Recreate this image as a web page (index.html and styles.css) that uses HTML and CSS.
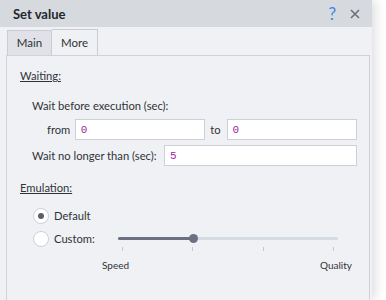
FILE: index.html
```html
<!DOCTYPE html>
<html lang="en">
<head>
    <meta charset="UTF-8">
    <title>Set value</title>
    <link rel="stylesheet" href="styles.css">
</head>
<body>
    <div class="window">
        <header class="titlebar">
            <span class="title">Set value</span>
            <span class="help">?</span>
            <svg class="close" width="10" height="10" viewBox="0 0 10 10">
                <path d="M1 1 L9 9 M9 1 L1 9" stroke="#6b6f78" stroke-width="1.6"/>
            </svg>
        </header>
        <nav class="tabs">
            <div class="tab">Main</div>
            <div class="tab active">More</div>
        </nav>
        <section class="panel">
            <h3 class="group">Waiting:</h3>
            <div class="row label-row">Wait before execution (sec):</div>
            <div class="row range-row">
                <span class="from">from</span>
                <div class="input">0</div>
                <span class="to">to</span>
                <div class="input">0</div>
            </div>
            <div class="row limit-row">
                <span class="limit-label">Wait no longer than (sec):</span>
                <div class="input">5</div>
            </div>

            <h3 class="group emu">Emulation:</h3>
            <div class="row radio-row">
                <span class="radio checked"></span>
                <span>Default</span>
            </div>
            <div class="row radio-row custom">
                <span class="radio"></span>
                <span class="custom-label">Custom:</span>
                <div class="slider">
                    <div class="track"><div class="fill" style="width: 34%"></div></div>
                    <span class="thumb" style="left: 34%"></span>
                    <div class="ticks"><i></i><i></i><i></i><i></i></div>
                </div>
            </div>
            <div class="scale">
                <span>Speed</span>
                <span>Quality</span>
            </div>
        </section>
    </div>
</body>
</html>
```

FILE: styles.css
```css
body {
    margin: 0;
    background-color: #ffffff;
    font-family: Lato, "Noto Sans", sans-serif;
    font-size: 11.2px;
    color: #2f3338;
}

.window {
    width: 372px;
    height: 300px;
    overflow: hidden;
    background-color: #f0f1f5;
    box-shadow: 4px 0 10px rgba(0, 0, 0, 0.12);
}

.titlebar {
    height: 27px;
    background-color: #d6d9de;
    display: flex;
    align-items: center;
    padding: 0 12px 0 13px;
}

.title {
    flex: 1;
    font-weight: bold;
    font-size: 13px;
    color: #23272c;
}

.help {
    color: #3d86e6;
    font-size: 17px;
    margin-right: 14px;
}

.tabs {
    display: flex;
    align-items: flex-end;
    height: 28px;
    padding-left: 7px;
}

.tab {
    width: 43px;
    height: 24px;
    line-height: 24px;
    text-align: center;
    background-color: #e0e2e7;
    border: 1px solid #c9ccd3;
    border-bottom: none;
    font-size: 11.5px;
}

.tab.active {
    width: 45px;
    height: 25px;
    line-height: 26px;
    background-color: #f0f1f5;
    border-left: none;
}

.panel {
    margin: 0 2px 0 6px;
    height: 260px;
    border: 1px solid #cfd2d8;
    padding: 13px 12px 0 13px;
}

.group {
    margin: 0;
    font-size: 11.2px;
    font-weight: normal;
    text-decoration: underline;
}

.row {
    display: flex;
    align-items: center;
}

.label-row {
    margin: 17px 0 0 12px;
}

.range-row {
    margin: 7px 0 0 27px;
}

.from {
    width: 28px;
}

.to {
    margin: 0 6px 0 5px;
}

.input {
    width: 124px;
    height: 19px;
    line-height: 20px;
    background-color: #ffffff;
    border: 1px solid #cdd0d7;
    padding-left: 5px;
    font-family: "Liberation Mono", monospace;
    font-size: 11px;
    color: #9c1e9e;
}

.limit-row {
    margin: 5px 0 0 12px;
}

.limit-label {
    flex-shrink: 0;
    width: 132px;
    white-space: nowrap;
}

.limit-row .input {
    width: 187px;
}

.emu {
    margin-top: 15px;
}

.radio-row {
    margin: 13px 0 0 13px;
    height: 17px;
}

.radio-row.custom {
    margin-top: 6px;
}

.radio {
    width: 14px;
    height: 14px;
    border: 1px solid #cdd0d7;
    border-radius: 50%;
    background-color: #ffffff;
    margin-right: 5px;
    position: relative;
}

.radio.checked::after {
    content: "";
    position: absolute;
    left: 4px;
    top: 4px;
    width: 6px;
    height: 6px;
    border-radius: 50%;
    background-color: #5a5f68;
}

.custom-label {
    width: 64px;
}

.slider {
    position: relative;
    width: 220px;
    height: 17px;
}

.track {
    position: absolute;
    top: 7px;
    left: 0;
    right: 0;
    height: 3px;
    border-radius: 2px;
    background-color: #d6dae1;
}

.fill {
    height: 100%;
    border-radius: 2px;
    background-color: #6b7182;
}

.thumb {
    position: absolute;
    top: 4px;
    width: 9px;
    height: 9px;
    margin-left: -4px;
    border-radius: 50%;
    background-color: #6b7182;
}

.ticks {
    position: absolute;
    top: 17px;
    left: 4px;
    right: 4px;
    display: flex;
    justify-content: space-between;
}

.ticks i {
    width: 1px;
    height: 4px;
    background-color: #c4c8cf;
}

.scale {
    display: flex;
    justify-content: space-between;
    width: 250px;
    margin: 12px 0 0 82px;
    font-size: 10px;
}
```
